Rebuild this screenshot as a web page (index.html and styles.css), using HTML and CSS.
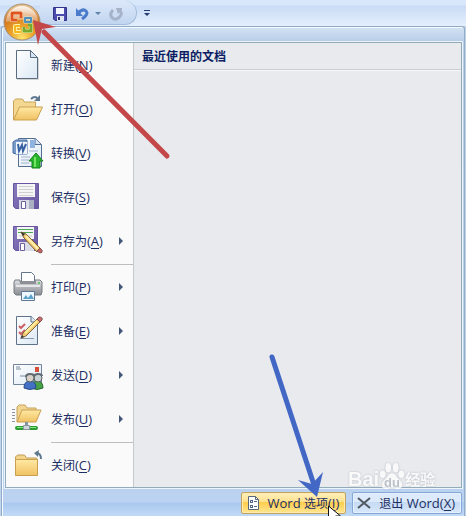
FILE: index.html
```html
<!doctype html>

<html lang="zh-CN">
	<head>
		<meta charset="utf-8">
		<title>Word</title>
		<link rel="stylesheet" href="styles.css">
	</head>
	<body>
		<header id="titlebar">
			<button id="office" aria-label="Office">
				<svg width="38" height="38" viewBox="0 0 38 38">
					<defs>
						<radialGradient id="orb" cx="50%" cy="95%" r="90%">
							<stop offset="0" stop-color="#ffe66d"/>
							<stop offset=".35" stop-color="#eda52b"/>
							<stop offset=".75" stop-color="#d07420"/>
							<stop offset="1" stop-color="#e9c08a"/>
						</radialGradient>
						<linearGradient id="gloss" x2="0" y2="1">
							<stop offset="0" stop-color="#fff" stop-opacity=".85"/>
							<stop offset="1" stop-color="#fff" stop-opacity=".3"/>
						</linearGradient>
					</defs>
					<circle cx="19" cy="19" r="18" fill="url(#orb)" stroke="#a48f78"/>
					<path d="M3 19a16 16 0 0 1 32 0q-16 -5 -32 0z" fill="url(#gloss)"/>
					<g fill="none" stroke-linejoin="round">
						<path d="M14 17H9V10h9v4" stroke="#fff2d8" stroke-width="4"/>
						<path d="M14 17H9V10h9v5" stroke="#df5520" stroke-width="3"/>
						<path d="M22 15h6v4h-6z" stroke="#d8e3da" stroke-width="3"/>
						<path d="M22 15h6v4h-6z" stroke="#4a91bc" stroke-width="2"/>
						<path d="M17 23h-5v6h6" stroke="#ffefa8" stroke-width="4"/>
						<path d="M17 23h-5v6h6" stroke="#f7b71f" stroke-width="2"/>
						<path d="M21 24v4h7v-6h-3" stroke="#eaf2bd" stroke-width="4"/>
						<path d="M21 24v4h7v-6h-3" stroke="#78a92d" stroke-width="3"/>
					</g>
				</svg>
			</button>
			<div id="quick">
				<button aria-label="保存">
					<svg width="14" height="14" viewBox="0 0 14 14">
						<path d="M.5.5h13v13H2l-1.500-1.500z" fill="#4c4caf" stroke="#34348b"/>
						<path d="M3 1h8v6H3z" fill="#f3f6ff"/>
						<path d="M4 9h7v5H4z" fill="#dfe4f2"/>
						<path d="M5 10h2v3H5z" fill="#303078"/>
					</svg>
				</button>
				<button class="undo" aria-label="撤消">
					<svg width="14" height="14" viewBox="0 0 14 14">
						<path d="M3 6q5-5 8-2t-4 8" fill="none" stroke="#4b7bcb" stroke-width="3"/>
						<path d="M1 1v8h7z" fill="#4b7bcb"/>
					</svg>
				</button>
				<button class="drop" aria-label="撤消列表">
					<svg width="6" height="4" viewBox="0 0 6 4"><path d="M0 0h6L3 3z" fill="#5f83a8"/></svg>
				</button>
				<button aria-label="恢复">
					<svg width="14" height="14" viewBox="0 0 14 14">
						<path d="M4 3q-4 4-1 7.500t7 0t1-6.500" fill="none" stroke="#a5b2c8" stroke-width="3"/>
						<path d="M7 1h6v2l-4 4z" fill="#a5b2c8"/>
					</svg>
				</button>
			</div>
			<button id="customize" aria-label="自定义快速访问工具栏">
				<svg width="6" height="6" viewBox="0 0 6 6"><path d="M0 0h6v1H0zM0 3h6L3 6z" fill="#263f70"/></svg>
			</button>
		</header>

		<main id="menu">
			<div id="panel">
				<nav>
					<button class="item">
						<svg class="icon" viewBox="0 0 32 32">
							<defs><linearGradient id="paper" x2="1" y2="1"><stop offset="0" stop-color="#fff"/><stop offset="1" stop-color="#dce8f4"/></linearGradient></defs>
							<path d="M5 30.500h21.500V9" fill="none" stroke="#d5d5d5"/>
							<path d="M4.500 1.500h14l7 7v21h-21z" fill="url(#paper)" stroke="#5a6d80"/>
							<path d="M18.500 1.500v7h7z" fill="#d8e7f5" stroke="#5a6d80"/>
						</svg>
						<span>新建<b>(<u>N</u>)</b></span>
					</button>
					<button class="item">
						<svg class="icon" viewBox="0 0 32 32">
							<defs><linearGradient id="folder" x2="0" y2="1"><stop offset="0" stop-color="#ffe9a3"/><stop offset="1" stop-color="#f0c163"/></linearGradient></defs>
							<path d="M1.500 27V8l2-2h7l2 3h11v5" fill="#f4d892" stroke="#c9a35a"/>
							<path d="M1.500 27l6-13h23l-6 13z" fill="url(#folder)" stroke="#c9a050"/>
							<path d="M19 6q4-4 7 0" fill="none" stroke="#60798f" stroke-width="2"/>
							<path d="M28 2v6h-6z" fill="#60798f"/>
						</svg>
						<span>打开<b>(<u>O</u>)</b></span>
					</button>
					<button class="item">
						<svg class="icon" viewBox="0 0 32 32">
							<path d="M6.500 1.500h17l6 6v22h-23z" fill="url(#paper)" stroke="#526e91"/>
							<path d="M23 1.500v6h6" fill="#d5e3f2" stroke="#526e91"/>
							<path d="M18 3h5v8h-5z" fill="#8eb3df"/>
							<path d="M17 14h9M9 20h9M9 23h8M9 26h8" stroke="#9fb3cc"/>
							<path d="M1 5l3-2h11v14H4l-3-1z" fill="#7c9cc8" stroke="#426da8"/>
							<path d="M4 5h11v12H4z" fill="#f1f6fd"/>
							<path d="M6 7l1 7 3-6 1 6 3-7" fill="none" stroke="#3862a4" stroke-width="2"/>
							<path d="M24 16l7 8h-3v7h-8v-7h-3z" fill="#29b52c" stroke="#168019"/>
							<path d="M23 20v10" stroke="#74e561" stroke-width="2"/>
						</svg>
						<span>转换<b>(<u>V</u>)</b></span>
					</button>
					<button class="item">
						<svg class="icon" viewBox="0 0 32 32">
							<defs><linearGradient id="disk" x2="1" y2="1"><stop offset="0" stop-color="#8b7bc0"/><stop offset="1" stop-color="#67569f"/></linearGradient></defs>
							<path d="M1.500 2.500h25v25h-23l-2-2z" fill="url(#disk)" stroke="#67569f"/>
							<path d="M5 3h18v13H5z" fill="#f5f5f5"/>
							<path d="M7 5.500h14M7 8.500h14M7 11.500h14M7 14.500h14" stroke="#d0d0d0"/>
							<path d="M7 19h15v9H7z" fill="#d9dbe6"/>
							<path d="M9.500 20.500h4v7h-4z" fill="#fff" stroke="#6e609c"/>
							<path d="M17 19h5v9h-5z" fill="#aaafc1"/>
						</svg>
						<span>保存<b>(<u>S</u>)</b></span>
					</button>
					<button class="item">
						<svg class="icon" viewBox="0 0 32 32">
							<path d="M1.500 1.500h24v24h-22l-2-2z" fill="url(#disk)" stroke="#67569f"/>
							<path d="M5 2h17v12H5z" fill="#f5f5f5"/>
							<path d="M6 4.500h15M6 7.500h15" stroke="#49a955"/>
							<path d="M7 11h13" stroke="#d0d0d0"/>
							<path d="M7 17h15v9H7z" fill="#d9dbe6"/>
							<path d="M8.500 18.500h4v7h-4z" fill="#fff" stroke="#6e609c"/>
							<path d="M9 7l5 2 14 14-3 4-13-14z" fill="#f3c970" stroke="#806336"/>
							<path d="M14 11l12 13" stroke="#fff0b0" stroke-width="2"/>
							<path d="M9 7l2 4 2-2z" fill="#333"/>
							<path d="M25 26l3-3 2 2q1 3-2 3z" fill="#c96460" stroke="#805456"/>
						</svg>
						<span>另存为<b>(<u>A</u>)</b></span>
						<i class="more"></i>
					</button>
					<hr>
					<button class="item">
						<svg class="icon" viewBox="0 0 32 32">
							<defs><linearGradient id="metal" x2="0" y2="1"><stop offset="0" stop-color="#dedfe1"/><stop offset=".5" stop-color="#b1b3b8"/><stop offset="1" stop-color="#888b91"/></linearGradient></defs>
							<path d="M9.500 13V1.500h10l3 3V13" fill="#fff" stroke="#65758b"/>
							<path d="M3 9h5v2h15V9h5l2 2v10l-1 3H4l-2-2V11z" fill="url(#metal)" stroke="#777b82"/>
							<path d="M8 10h16v3H8z" fill="#8d9197"/>
							<path d="M4 15h24" stroke="#e5e6e7" stroke-width="2"/>
							<path d="M26 12h2" stroke="#6ac56c" stroke-width="2"/>
							<path d="M9.500 20.500h13v9h-13z" fill="#edf7ff" stroke="#607894"/>
							<path d="M11 28l3-4 2 3 3-4 3 5z" fill="#5aa1cb"/>
						</svg>
						<span>打印<b>(<u>P</u>)</b></span>
						<i class="more"></i>
					</button>
					<button class="item">
						<svg class="icon" viewBox="0 0 32 32">
							<path d="M4.500 1.500h15l6 6v22h-21z" fill="url(#paper)" stroke="#60728a"/>
							<path d="M19 1v6h6" fill="#d9e6f3" stroke="#60728a"/>
							<path d="M7 11l2 2 4-4M7 17l2 2 4-4" fill="none" stroke="#cd5f64" stroke-width="2"/>
							<path d="M8 23.500h14" stroke="#8a9bb0"/>
							<path d="M9 23l2-5L25 4l3 3-14 14z" fill="#f4ca70" stroke="#7e643e"/>
							<path d="M13 18L25 6" stroke="#fff0a0" stroke-width="2"/>
							<path d="M9 23l1-3 2 2z" fill="#333"/>
							<path d="M25 4l2-2q4 0 3 3l-2 2z" fill="#ce6f6e" stroke="#805456"/>
						</svg>
						<span>准备<b>(<u>E</u>)</b></span>
						<i class="more"></i>
					</button>
					<button class="item">
						<svg class="icon" viewBox="0 0 32 32">
							<path d="M1.500 5.500h28v20h-28z" fill="url(#paper)" stroke="#71849b"/>
							<path d="M4 8h4M4 10h5M8 17h9" stroke="#788ba3"/>
							<path d="M23 8h4v5h-4z" fill="#d64e38"/>
							<path d="M19 29q0-7 6-7t6 7q-6 3-12 0z" fill="#48a347" stroke="#276b31"/>
							<circle cx="26" cy="19" r="4" fill="#c9d2d5" stroke="#555e65"/>
							<path d="M12 29q0-7 6-7t6 7q-6 3-12 0z" fill="#4270c4" stroke="#294a89"/>
							<circle cx="18" cy="19" r="4" fill="#d8d1c7" stroke="#555e65"/>
							<path d="M14 18q0-3 4-3t4 2M22 18q0-3 4-3t4 2" fill="none" stroke="#656b74" stroke-width="2"/>
						</svg>
						<span>发送<b>(<u>D</u>)</b></span>
						<i class="more"></i>
					</button>
					<button class="item">
						<svg class="icon" viewBox="0 0 32 32">
							<path d="M0 6.500h3M0 9.500h3M0 12.500h3M0 15.500h3M0 18.500h3" stroke="#8a96a6"/>
							<path d="M5 19V4l2-2h6l2 3h9v4" fill="#f3d592" stroke="#c9a35a"/>
							<path d="M5 19l5-12h19l-5 12z" fill="url(#folder)" stroke="#c9a050"/>
							<path d="M14.500 19v6" stroke="#8393a0" stroke-width="3"/>
							<path d="M5 25h19" stroke="#2c9c35" stroke-width="4" stroke-linecap="round"/>
							<path d="M5 24.500h19" stroke="#86e381"/>
							<path d="M11.500 22.500h6v4h-6z" fill="#cfd6dc" stroke="#8b959e"/>
						</svg>
						<span>发布<b>(<u>U</u>)</b></span>
						<i class="more"></i>
					</button>
					<hr>
					<button class="item">
						<svg class="icon" viewBox="0 0 32 32">
							<path d="M3.500 26V8l2-2h7l2 3h10l1 2v15z" fill="#f2d48a" stroke="#c09c54"/>
							<path d="M3.500 10.500h22v16h-22z" fill="url(#folder)" stroke="#c9a050"/>
							<path d="M24 4q5 0 5 6" fill="none" stroke="#60798f" stroke-width="2"/>
							<path d="M27 1l-5 3 4 4z" fill="#60798f"/>
						</svg>
						<span>关闭<b>(<u>C</u>)</b></span>
					</button>
				</nav>
				<section id="recent">
					<h2>最近使用的文档</h2>
				</section>
			</div>

			<footer>
				<button class="cmd active">
					<svg width="16" height="16" viewBox="0 0 16 16">
						<path d="M3.500 1.500h7l3 3v10h-10z" fill="#fff" stroke="#59677a"/>
						<path d="M10.500 1.500v3h3" fill="none" stroke="#59677a"/>
						<path d="M5 5h3v3H5zM5 10h3v3H5z" fill="#4f6788"/>
						<path d="M6 6h1v1H6zM6 11h1v1H6z" fill="#fff"/>
						<path d="M9 6.500h3M9 11.500h3" stroke="#4f6788"/>
					</svg>
					<span><b>Word </b>选项<b>(<u>I</u>)</b></span>
				</button>
				<button class="cmd">
					<svg width="16" height="16" viewBox="0 0 16 16"><path d="M2 3l12 10M14 3L2 13" stroke="#505862" stroke-width="2"/></svg>
					<span>退出<b> Word(<u>X</u>)</b></span>
				</button>
			</footer>
		</main>

		<!-- watermark -->
		<div id="mark">
			<span>Bai</span>
			<svg width="26" height="30" viewBox="0 0 28 32">
				<g fill="#fff">
					<ellipse cx="4" cy="13" rx="3" ry="4"/>
					<ellipse cx="10" cy="6" rx="3" ry="5"/>
					<ellipse cx="18" cy="6" rx="3" ry="5"/>
					<ellipse cx="24" cy="13" rx="3" ry="4"/>
					<path d="M14 12c4 0 5 5 8 7 4 3 4 9 0 10-3 1-5-1-8-1s-5 2-8 1c-4-1-4-7 0-10 3-2 4-7 8-7z"/>
				</g>
				<text x="14" y="27" text-anchor="middle">du</text>
			</svg>
			<span class="cn">经验</span>
		</div>

		<!-- pointers -->
		<svg id="arrows" width="466" height="516" viewBox="0 0 466 516">
			<path d="M167 156L44 32" stroke="#c4484a" stroke-width="5" stroke-linecap="round"/>
			<path d="M33 20l23 7-14 2-4 16z" fill="#c4484a"/>
			<path d="M272 357l42 128" stroke="#4267c5" stroke-width="5" stroke-linecap="round"/>
			<path d="M317 497l-19-17 14 4 11-12z" fill="#4267c5"/>
			<path d="M328.500 506v15l4-4 3 6h3l-3-7h5z" fill="#fff" stroke="#111"/>
		</svg>
	</body>
</html>
```
FILE: styles.css
```css
body, html {
	margin: 0;
	padding: 0;
	height: 100%;
}

body {
	position: relative;
	display: flex;
	flex-direction: column;
	overflow: hidden;
	background: #bfd5ef;
	color: #1c2e63;
	font: 12px "Noto Sans CJK SC", sans-serif;
}

button {
	display: flex;
	align-items: center;
	padding: 0;
	border: 0;
	background: none;
	color: inherit;
	font: inherit;
}

svg {
	display: block;
	flex-shrink: 0;
}

b {
	font: 13px "Open Sans", sans-serif;
	white-space: pre;
}

u {
	text-underline-offset: 2px;
}

#titlebar {
	height: 26px;
	flex-shrink: 0;
	display: flex;
	align-items: center;
	background: linear-gradient(#d8e7fa 0 5px, #c9dcf5 6px, #e4effd);
}

/* the orb hangs over the top edge of the menu */
#office {
	position: absolute;
	top: 3px;
	left: 3px;
	z-index: 2;
}

#quick {
	display: flex;
	align-items: center;
	gap: 6px;
	box-sizing: border-box;
	height: 24px;
	margin-left: 40px;
	padding: 2px 13px 0;
	border: 1px solid #a3bcdc;
	border-width: 0 1px 1px 0;
	border-radius: 0 12px 12px 0;
	background: linear-gradient(#dbe8f9, #c1d5f0);
}

#quick .drop {
	margin-right: 2px;
}

#quick .undo {
	margin-left: 2px;
}

#customize {
	margin-left: 7px;
}

#menu {
	flex: 1;
	display: flex;
	flex-direction: column;
	margin: 0 1px;
	padding: 15px 2px 0 3px;
	border: 1px solid #91abc5;
	border-bottom: 0;
	border-radius: 3px 3px 0 0;
	box-shadow: inset 1px 1px #f4faff;
	background: linear-gradient(#d5e2f4, #b8cee9 14px, #bad2f0 460px, #bbd3f1 475px, #aac8ee 476px, #c1daf7);
}

#panel {
	display: flex;
	border: 1px solid #91abb9;
	outline: 1px solid #edf5fc;
}

nav {
	flex: 0 0 127px;
	background: #fafafa;
	border-right: 1px solid #c5c8cc;
}

.item {
	width: 100%;
	height: 44px;
	padding-left: 6px;
	text-align: left;
}

.icon {
	width: 32px;
	height: 32px;
	margin-right: 7px;
}

.more {
	margin-left: auto;
	margin-right: 10px;
	border: 4px solid transparent;
	border-left-color: #425777;
	border-right: 0;
}

hr {
	height: 1px;
	margin: 1px 0 0 45px;
	border: 0;
	background: #bcbec2;
}

#recent {
	flex: 1;
	background: #e8eaed;
}

h2 {
	margin: 0;
	padding: 0 8px;
	border-bottom: 1px solid #c9ced5;
	box-shadow: 0 1px #f7f8fa;
	color: #0b1e63;
	font-size: 12px;
	line-height: 26px;
}

footer {
	display: flex;
	justify-content: flex-end;
	gap: 6px;
	padding: 4px 0 2px;
}

.cmd {
	box-sizing: border-box;
	height: 22px;
	padding: 0 6px 0 3px;
	gap: 7px;
	border: 1px solid #86a8d6;
	border-radius: 2px;
	box-shadow: inset 0 0 0 1px #e5f0fd;
	background: linear-gradient(#dceafb 0 45%, #c5daf4 46%, #d9e8fb);
	white-space: nowrap;
}

.cmd.active {
	border-color: #c2a45d;
	box-shadow: inset 0 0 0 1px #ffeab0;
	background: linear-gradient(#fff0bd, #ffe08a 45%, #ffcd4b 46%, #ffe691);
}

#mark {
	position: absolute;
	top: 462px;
	left: 348px;
	display: flex;
	align-items: flex-end;
	opacity: .75;
	color: #fff;
	font: bold 20px/26px "Liberation Sans", sans-serif;
	filter: drop-shadow(0 0 1px #a9b0b9);
	pointer-events: none;
}

#mark text {
	fill: #adb4bd;
	font-size: 14px;
}

#mark .cn {
	font: bold 15px/26px "Noto Sans CJK SC", sans-serif;
}

#arrows {
	position: absolute;
	top: 0;
	left: 0;
	z-index: 3;
	pointer-events: none;
}
```
